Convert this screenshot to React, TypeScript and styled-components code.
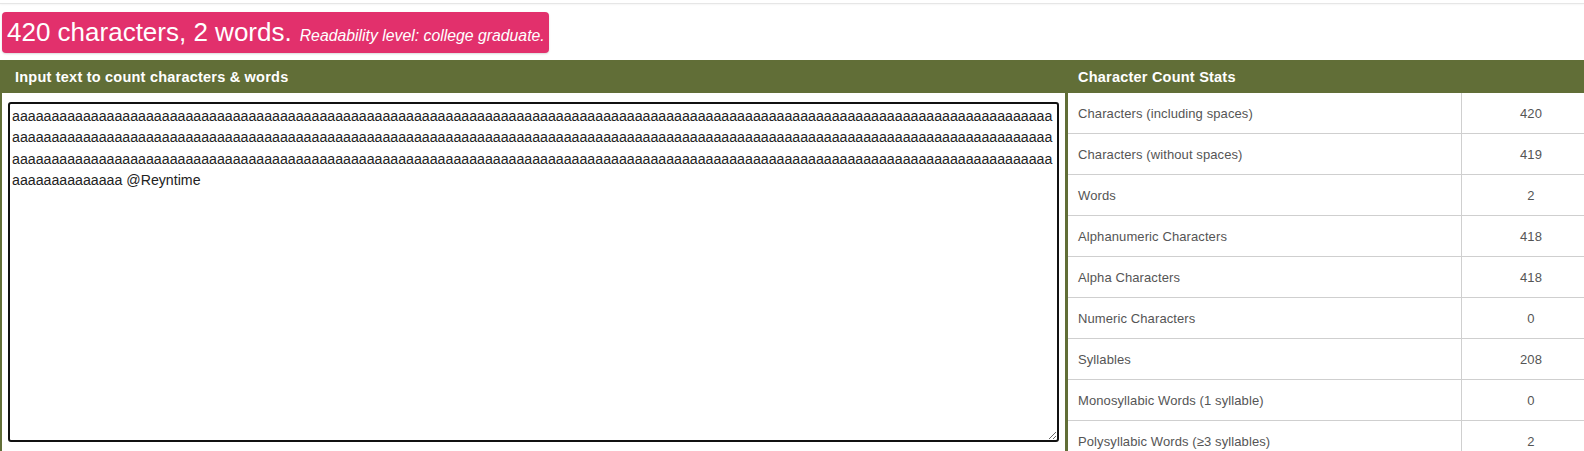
import React from 'react';
import styled, { createGlobalStyle } from 'styled-components';

const GlobalStyle = createGlobalStyle`
  html, body {
    margin: 0;
    padding: 0;
    background: #fff;
    overflow: hidden;
    font-family: "Liberation Sans", Arial, sans-serif;
  }
`;

const green = '#616e37';

const Page = styled.div`
  height: 451px;
  overflow: hidden;
`;

const TopRule = styled.div`
  height: 3px;
  border-bottom: 1px solid #e6e6e6;
  box-shadow: 0 1px 2px rgba(0, 0, 0, 0.04);
`;

const SummaryRow = styled.div`
  display: flex;
  padding: 8px 0 7px 2px;
`;

const Summary = styled.div`
  display: flex;
  align-items: baseline;
  height: 41px;
  line-height: 41px;
  padding: 0 4px 0 5px;
  background: #e2306c;
  color: #fff;
  border-radius: 4px;
  box-shadow: 0 1px 2px rgba(0, 0, 0, 0.15);
`;

const Count = styled.span`
  font-size: 26px;
`;

const Readability = styled.span`
  font-size: 15.8px;
  font-style: italic;
  margin-left: 8px;
`;

const Main = styled.div`
  display: flex;
  align-items: stretch;
  height: 391px;
  overflow: hidden;
`;

const Panel = styled.section<{ $width?: number; $edge: number }>`
  ${({ $width }) => ($width ? `width: ${$width}px; flex: 0 0 auto;` : 'flex: 1 1 auto;')}
  border-left: ${({ $edge }) => $edge}px solid ${green};
  box-sizing: border-box;
  display: flex;
  flex-direction: column;
  min-width: 0;
  overflow: hidden;
`;

const PanelHeader = styled.h2<{ $pad: number }>`
  margin: 0;
  flex: 0 0 33px;
  height: 33px;
  line-height: 34px;
  background: ${green};
  color: #fff;
  font-size: 14.5px;
  letter-spacing: 0.22px;
  font-weight: bold;
  white-space: nowrap;
  padding-left: ${({ $pad }) => $pad}px;
  box-shadow: 0 -1px 1px rgba(0, 0, 0, 0.08);
`;

const InputBody = styled.div`
  padding: 9px 6px 8px 6px;
`;

const TextBox = styled.textarea`
  display: block;
  box-sizing: border-box;
  width: 1051px;
  height: 340px;
  border: 2px solid #111;
  border-radius: 3px;
  padding: 2px;
  margin: 0;
  font-family: "Liberation Sans", Arial, sans-serif;
  font-size: 14.18px;
  line-height: 21.3px;
  color: #222;
  outline: none;
  resize: vertical;
`;

const StatsGrid = styled.div`
  display: grid;
  grid-template-columns: 393px 139px;
  grid-auto-rows: 41px;
`;

const Cell = styled.div<{ $value?: boolean }>`
  box-sizing: border-box;
  border-bottom: 1px solid #cfcfcf;
  ${({ $value }) => ($value ? 'border-left: 1px solid #cfcfcf;' : '')}
  display: flex;
  align-items: center;
  justify-content: ${({ $value }) => ($value ? 'center' : 'flex-start')};
  padding-left: ${({ $value }) => ($value ? '0' : '10px')};
  padding-top: 1px;
  font-size: 13px;
  letter-spacing: 0.1px;
  color: #555;
  white-space: nowrap;
`;

const stats: [string, string][] = [
  ['Characters (including spaces)', '420'],
  ['Characters (without spaces)', '419'],
  ['Words', '2'],
  ['Alphanumeric Characters', '418'],
  ['Alpha Characters', '418'],
  ['Numeric Characters', '0'],
  ['Syllables', '208'],
  ['Monosyllabic Words (1 syllable)', '0'],
  ['Polysyllabic Words (\u22653 syllables)', '2'],
];

const sample = `${'a'.repeat(410)} @Reyntime`;

function App() {
  return (
    <Page>
      <GlobalStyle />
      <TopRule />
      <SummaryRow>
        <Summary>
          <Count>420 characters, 2 words.</Count>
          <Readability>Readability level: college graduate.</Readability>
        </Summary>
      </SummaryRow>
      <Main>
        <Panel $width={1065} $edge={2}>
          <PanelHeader $pad={13}>Input text to count characters &amp; words</PanelHeader>
          <InputBody>
            <TextBox defaultValue={sample} spellCheck={false} />
          </InputBody>
        </Panel>
        <Panel $edge={3}>
          <PanelHeader $pad={10}>Character Count Stats</PanelHeader>
          <StatsGrid>
            {stats.map(([label, value]) => (
              <React.Fragment key={label}>
                <Cell>{label}</Cell>
                <Cell $value>{value}</Cell>
              </React.Fragment>
            ))}
          </StatsGrid>
        </Panel>
      </Main>
    </Page>
  );
}

export default App;
